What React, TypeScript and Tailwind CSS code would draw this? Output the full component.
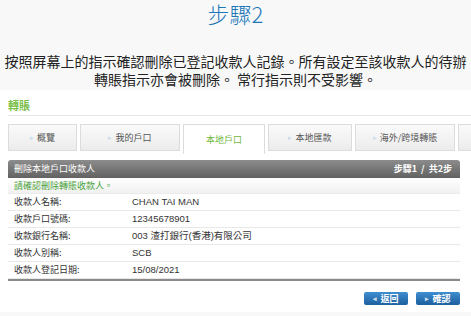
const tabs = [
  { label: "概覽", w: "w-[69px]" },
  { label: "我的戶口", w: "w-[100px]" },
  { label: "本地戶口", w: "w-[82px]", active: true },
  { label: "本地匯款", w: "w-[84px]" },
  { label: "海外/跨境轉賬", w: "w-[100px]" },
  { label: "", w: "w-[20px]" },
];

const rows = [
  { label: "收款人名稱:", value: "CHAN TAI MAN" },
  { label: "收款戶口號碼:", value: "12345678901" },
  { label: "收款銀行名稱:", value: "003 渣打銀行(香港)有限公司" },
  { label: "收款人別稱:", value: "SCB" },
  { label: "收款人登記日期:", value: "15/08/2021" },
];

function Arrow({ left }: { left?: boolean }) {
  return (
    <span className="text-[7px] text-[#c8dcef] mr-[3px]">{left ? "◂" : "▸"}</span>
  );
}

export default function App() {
  return (
    <div className="w-[471px] h-[316px] overflow-hidden bg-white font-['Noto_Sans_CJK_TC',sans-serif]">
      {/* Step intro */}
      <div className="bg-[#f8f8f8] h-[90px] text-center">
        <h1 className="text-[22px] leading-[26px] font-light text-[#1b78b8]">步驟2</h1>
        <div className="mt-[26px] text-[14px] text-[#222]">
          <p className="h-[18px] leading-[18px]">按照屏幕上的指示確認刪除已登記收款人記錄。所有設定至該收款人的待辦</p>
          <p className="h-[18px] leading-[18px]">轉賬指示亦會被刪除。 常行指示則不受影響。</p>
        </div>
      </div>

      {/* Screenshot of e-banking page */}
      <div className="h-[222px] pl-[8px] pr-[11px] overflow-hidden">
        <div className="pt-[8px] text-[11px] leading-[14px] font-bold text-[#7cbf4a]">轉賬</div>
        <div className="mt-[3px] h-px bg-[#e6e6e6] -mr-[11px]" />

        <div className="mt-[8px] flex gap-[3px] h-[27px] -mr-[40px]">
          {tabs.map((t, i) => (
            <div
              key={i}
              className={`${t.w} shrink-0 flex items-center justify-center border border-[#dcdcdc] text-[9px] ${
                t.active
                  ? "bg-white border-b-0 text-[#72b740] h-[30px]"
                  : "bg-gradient-to-b from-[#fafafa] to-[#ececec] text-[#555]"
              }`}
            >
              {!t.active && t.label && <Arrow />}
              {t.label}
            </div>
          ))}
        </div>

        <div className="mt-[9px] h-[18px] rounded-t-[3px] bg-gradient-to-b from-[#8c8c8c] to-[#626262] flex items-center justify-between px-[6px] text-[9px] text-white">
          <span>刪除本地戶口收款人</span>
          <span className="font-bold mr-[2px]">步驟1 &nbsp;/&nbsp; 共2步</span>
        </div>
        <div className="h-[16px] bg-gradient-to-b from-[#ffffff] to-[#f1f1f1] flex items-center px-[6px] text-[9px] text-[#4aa23a] border-b border-[#ebebeb]">
          請確認刪除轉賬收款人。
        </div>
        {rows.map((r) => (
          <div
            key={r.label}
            className="h-[17px] flex items-center border-b border-[#e8e8e8] text-[9px] text-[#333]"
          >
            <span className="w-[124px] pl-[6px]">{r.label}</span>
            <span className="font-['Liberation_Sans','Noto_Sans_CJK_TC',sans-serif] text-[9.5px]">{r.value}</span>
          </div>
        ))}
        <div className="h-[2px] bg-[#8a8a8a]" />

        <div className="mt-[11px] flex justify-end gap-[8px]">
          {["返回", "確認"].map((b, i) => (
            <button
              key={b}
              className="w-[44px] h-[13px] rounded-[2px] bg-gradient-to-b from-[#3f8ed0] to-[#1d5f9f] text-white text-[9px] font-bold flex items-center justify-center leading-none"
            >
              <Arrow left={i === 0} />
              {b}
            </button>
          ))}
        </div>
      </div>
      <div className="h-[4px] bg-[#f8f8f8]" />
    </div>
  );
}
